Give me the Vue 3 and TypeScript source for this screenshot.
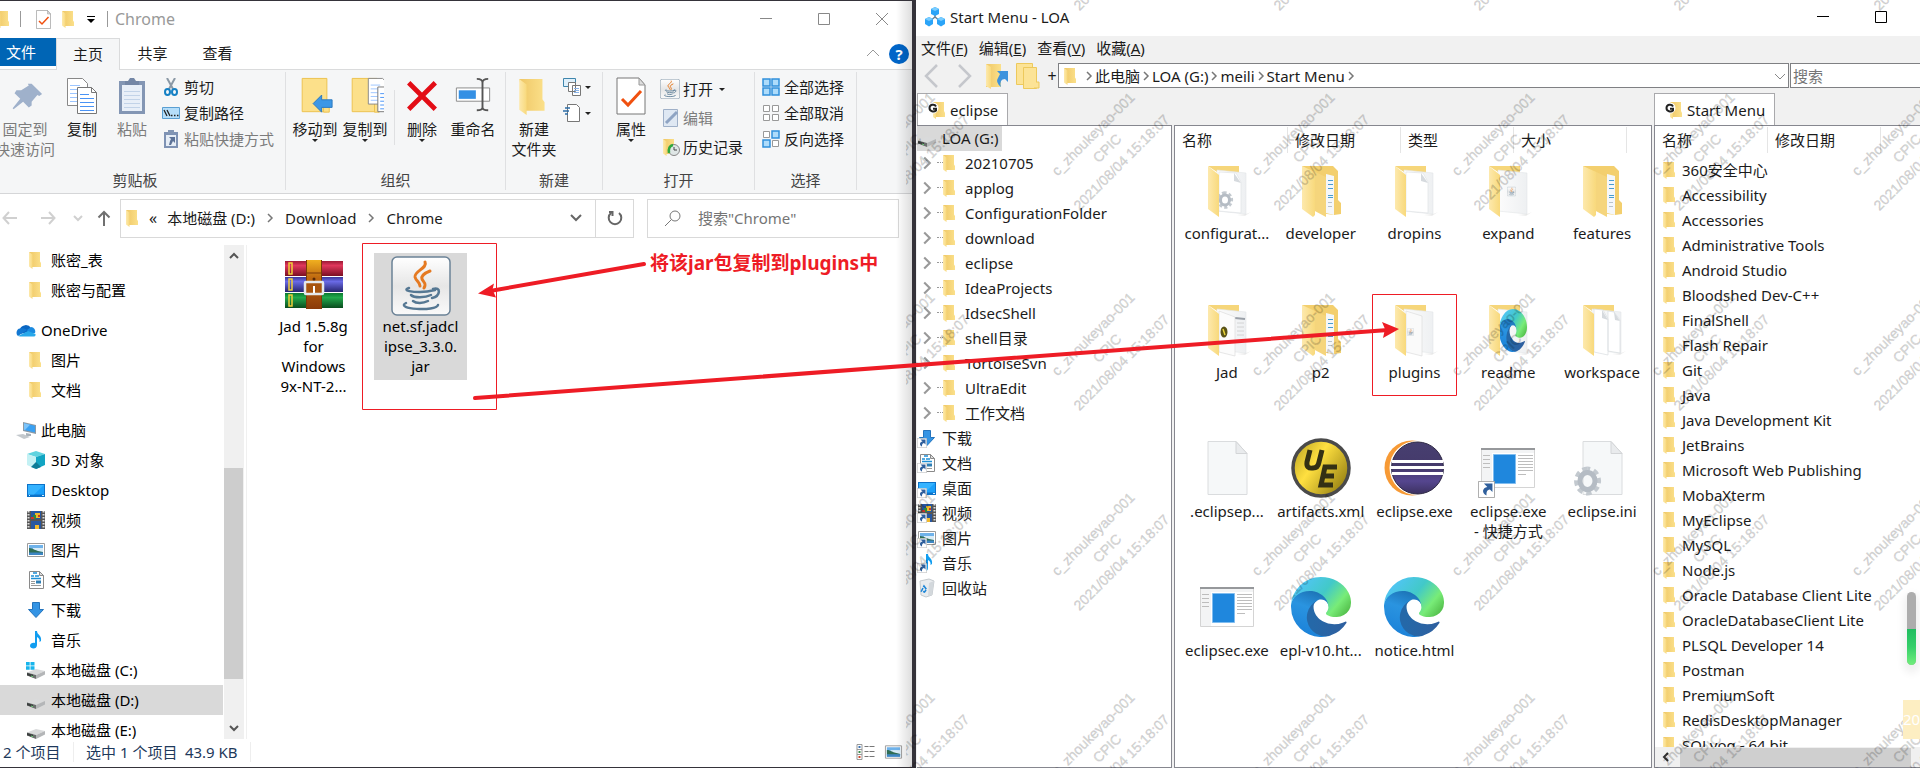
<script setup lang="ts">
import { ref } from 'vue'

interface Item {
  name: string
  icon: string
  link?: boolean
}

const navGroups: { root?: Item; children: Item[] }[] = [
  {
    children: [
      { name: '账密_表', icon: 'folder' },
      { name: '账密与配置', icon: 'folder' },
    ],
  },
  {
    root: { name: 'OneDrive', icon: 'cloud' },
    children: [
      { name: '图片', icon: 'folder' },
      { name: '文档', icon: 'folder' },
    ],
  },
  {
    root: { name: '此电脑', icon: 'pc' },
    children: [
      { name: '3D 对象', icon: 'cube' },
      { name: 'Desktop', icon: 'desktop' },
      { name: '视频', icon: 'video' },
      { name: '图片', icon: 'picture' },
      { name: '文档', icon: 'document' },
      { name: '下载', icon: 'download' },
      { name: '音乐', icon: 'music' },
      { name: '本地磁盘 (C:)', icon: 'disk-win' },
      { name: '本地磁盘 (D:)', icon: 'disk' },
      { name: '本地磁盘 (E:)', icon: 'disk' },
    ],
  },
]
const selectedNav = ref('本地磁盘 (D:)')

const treeFolders: string[] = [
  '20210705', 'applog', 'ConfigurationFolder', 'download', 'eclipse', 'IdeaProjects',
  'IdsecShell', 'shell目录', 'TortoiseSvn', 'UltraEdit', '工作文档',
]
const treeRoots: Item[] = [
  { name: '下载', icon: 'download', link: true },
  { name: '文档', icon: 'document', link: true },
  { name: '桌面', icon: 'desktop', link: true },
  { name: '视频', icon: 'video', link: true },
  { name: '图片', icon: 'picture', link: true },
  { name: '音乐', icon: 'music', link: true },
  { name: '回收站', icon: 'recycle' },
]

const files: Item[] = [
  { name: 'configurat...', icon: 'big-config' },
  { name: 'developer', icon: 'big-full' },
  { name: 'dropins', icon: 'big-paper' },
  { name: 'expand', icon: 'big-jar' },
  { name: 'features', icon: 'big-full' },
  { name: 'Jad', icon: 'big-jad' },
  { name: 'p2', icon: 'big-full' },
  { name: 'plugins', icon: 'big-plugins' },
  { name: 'readme', icon: 'big-edge' },
  { name: 'workspace', icon: 'big-two' },
  { name: '.eclipsep...', icon: 'big-file' },
  { name: 'artifacts.xml', icon: 'big-ue' },
  { name: 'eclipse.exe', icon: 'big-eclipse' },
  { name: 'eclipse.exe\n- 快捷方式', icon: 'big-exe', link: true },
  { name: 'eclipse.ini', icon: 'big-ini' },
  { name: 'eclipsec.exe', icon: 'big-exe' },
  { name: 'epl-v10.ht...', icon: 'edge' },
  { name: 'notice.html', icon: 'edge' },
]

const startMenu: string[] = [
  '360安全中心', 'Accessibility', 'Accessories', 'Administrative Tools', 'Android Studio',
  'Bloodshed Dev-C++', 'FinalShell', 'Flash Repair', 'Git', 'Java', 'Java Development Kit',
  'JetBrains', 'Microsoft Web Publishing', 'MobaXterm', 'MyEclipse', 'MySQL', 'Node.js',
  'Oracle Database Client Lite', 'OracleDatabaseClient Lite', 'PLSQL Developer 14', 'Postman',
  'PremiumSoft', 'RedisDesktopManager', 'SQLyog - 64 bit',
]

const menus: [string, string][] = [['文件', 'F'], ['编辑', 'E'], ['查看', 'V'], ['收藏', 'A']]
const crumbs: string[] = ['此电脑', 'LOA (G:)', 'meili', 'Start Menu']

const marks: { x: number; y: number }[] = []
for (let row = -1; row < 4; row++) {
  for (let col = 0; col < 6; col++) marks.push({ x: col * 200 - 13, y: row * 200 + 134 })
}
</script>

<template>
  <div class="page">
    <svg class="sprite" aria-hidden="true">
      <defs>
        <linearGradient id="gFlap" x1="0" x2="1"><stop offset="0" stop-color="#fde9ad" /><stop offset="1" stop-color="#f8d97c" /></linearGradient>
        <linearGradient id="gBody" x1="0" x2="1"><stop offset="0" stop-color="#efc766" /><stop offset="1" stop-color="#fbe08a" /></linearGradient>
        <linearGradient id="gPaper" x1="0" x2="1"><stop offset="0" stop-color="#fcfcfc" /><stop offset="1" stop-color="#eef0f2" /></linearGradient>
        <linearGradient id="gEdgeA" x1="0.2" x2="1"><stop offset="0" stop-color="#2568a8" /><stop offset="1" stop-color="#2f5f9f" /></linearGradient>
        <linearGradient id="gEdgeB" x1="0.6" y1="0" x2="0.3" y2="1"><stop offset="0" stop-color="#1b6fb0" /><stop offset="0.4" stop-color="#2a94e0" /><stop offset="1" stop-color="#1a80d8" /></linearGradient>
        <linearGradient id="gEdgeC" x1="0" y1="0.2" x2="1" y2="0.75"><stop offset="0" stop-color="#54c4ff" /><stop offset="0.5" stop-color="#42c9c8" /><stop offset="0.8" stop-color="#78ec78" /><stop offset="1" stop-color="#56c24e" /></linearGradient>
        <linearGradient id="gRed" x2="0" y2="1"><stop offset="0" stop-color="#9c1a35" /><stop offset="0.3" stop-color="#e0375c" /><stop offset="1" stop-color="#7a0f22" /></linearGradient>
        <linearGradient id="gBlue" x2="0" y2="1"><stop offset="0" stop-color="#39389a" /><stop offset="0.3" stop-color="#6a6ae6" /><stop offset="1" stop-color="#27256e" /></linearGradient>
        <linearGradient id="gGreen" x2="0" y2="1"><stop offset="0" stop-color="#0b7a30" /><stop offset="0.3" stop-color="#22a94c" /><stop offset="1" stop-color="#0a4c1e" /></linearGradient>
        <linearGradient id="gBelt" x2="0" y2="1"><stop offset="0" stop-color="#f0b020" /><stop offset="0.35" stop-color="#c06a10" /><stop offset="1" stop-color="#8a3a0a" /></linearGradient>
        <linearGradient id="gUe" x2="1" y2="0.7"><stop offset="0" stop-color="#b09a20" /><stop offset="0.45" stop-color="#ffe040" /><stop offset="1" stop-color="#9a8414" /></linearGradient>
        <linearGradient id="gEc" x2="0" y2="1"><stop offset="0" stop-color="#473f70" /><stop offset="0.5" stop-color="#453a6b" /><stop offset="0.75" stop-color="#55468f" /><stop offset="1" stop-color="#3c3160" /></linearGradient>
        <linearGradient id="gJar" x2="0" y2="1"><stop offset="0" stop-color="#ffffff" /><stop offset="0.5" stop-color="#e6e6e6" /><stop offset="1" stop-color="#fafafa" /></linearGradient>
      </defs>
      <symbol id="folder" viewBox="0 0 20 20"><path fill="url(#gBody)" d="M3 2h11v9.500l1 1.500v4H6z" /><path fill="url(#gFlap)" d="M3 2l3.500 2.500V19L3 16.500z" /></symbol>
      <symbol id="cloud" viewBox="0 0 20 20"><path fill="#0a66c2" d="M4 9a6 5.500 0 0 1 11-1l-2 4-9 2z" /><path fill="#1a8ae0" d="M11 10l4-3a4.500 4.500 0 0 1 4 6l-6 1z" /><path fill="#1277d2" d="M4 8.500c-3 0-5 5-2 7.500l9-6c-2-1.500-4-2-7-1.500z" /><path fill="#28a8ea" d="M2 16l10-5 7.500 3c.5 2-1 2.500-2 2.500H4z" /></symbol>
      <symbol id="pc" viewBox="0 0 20 20"><path fill="#8d99a3" d="M7 2l13 3v9L7 11z" /><path fill="#39a0f2" d="M8 3.200l11 2.600v6.800L8 10z" /><path fill="#7cc4fa" d="M8 3.200l6 1.500L9 10l-1-.2z" /><path fill="#a9b2b9" d="M10 13l5 1v2h-5z" /><path fill="#c3c8cc" d="M0 15l7-1 7 3-6 2z" /></symbol>
      <symbol id="cube" viewBox="0 0 20 20"><path fill="#5fd3df" d="M1 4l9-3 9 3-9 3z" /><path fill="#c4f1f4" d="M1 4l9 3v12l-9-4z" /><path fill="#12a5c3" d="M19 4l-9 3v12l9-4z" /><path fill="#0e7c97" d="M10 12l5 5-5 2-5-2z" /></symbol>
      <symbol id="desktop" viewBox="0 0 20 20"><path fill="#0d72c8" d="M1 4h18v13H1z" /><path fill="#1ba0fa" d="M2 5h16v9.500H2z" /><path fill="#35b3ff" d="M2 5h16L8 14.500H2z" /><path fill="#d8f0ff" d="M3 15h1v1H3zM16 15h2v1h-2z" /></symbol>
      <symbol id="video" viewBox="0 0 20 20"><path fill="#555" d="M1 1h18v18H1z" /><path stroke="#ddd" stroke-width="2" stroke-dasharray="1.500 1.500" d="M2.500 1v18M17.500 1v18" /><path fill="#2757a0" d="M5 1h10v8H5zM5 11h10v8H5z" /><path fill="#f0b92c" d="M9 3h5v5H9zM9 15h4v4H9z" /><path fill="#2d8b3c" d="M7 5h3v4H7z" /><path fill="#c8362c" d="M5 7h3v2H5zM12 5h2v2h-2z" /></symbol>
      <symbol id="picture" viewBox="0 0 20 20"><path fill="#fff" stroke="#9b9b9b" d="M1.500 3.500h17v13h-17z" /><path fill="#6fb2ea" d="M3 5h14v10H3z" /><path fill="#d8ecf7" d="M7 8h10v4H7z" /><path fill="#2f6d55" d="M3 8c4 0 6 3 14 4v1H3z" /><path fill="#3d86c4" d="M3 12.500h14V15H3z" /></symbol>
      <symbol id="document" viewBox="0 0 20 20"><path fill="#fff" stroke="#8a8a8a" d="M3.500 1.500h10l4 4v13h-14z" /><path fill="#ddd" stroke="#8a8a8a" d="M13.500 1.500v4h4z" /><path stroke="#1e8fd5" stroke-width="1.300" d="M7 3h4M5 6h3M9 6h4M5 8.500h10" /><path stroke="#999" d="M5 11.500h4M5 13.500h4M5 15.500h10" /><path fill="#2f7fb5" d="M10 10.500h5v3h-5z" /></symbol>
      <symbol id="download" viewBox="0 0 20 20"><path fill="#3494e4" stroke="#2474bd" d="M6.500 2.500h7v7h4L10 17.500 2.500 9.500h4z" /></symbol>
      <symbol id="music" viewBox="0 0 20 20"><path fill="#119df0" d="M9 1h2c0 4 5 4 4 10l-1.500 1c.5-3-1-4-2.500-5v8c0 5-7 4-7 1s3-3.500 5-3z" /></symbol>
      <symbol id="disk" viewBox="0 0 20 20"><path fill="#d9dadb" d="M1 12.500l9-3.500 9 2-9 4z" /><path fill="#6b6f6e" d="M1 12.500l9 2.500v4l-9-3.500z" /><path fill="#b4b6b8" d="M10 15l9-4v3.500L10 19z" /><path fill="#3c403f" d="M1 13l6 1.700v2.500l-6-2z" /><path stroke="#6ed07a" d="M5 16l2 .7" /></symbol>
      <symbol id="disk-win" viewBox="0 0 20 20"><use href="#disk" /><path fill="#18b5ec" d="M0 2h3.700v3.500H0zM4.500 2h4v3.500h-4zM0 6.300h3.700v3.500H0zM4.500 6.300h4v3.500h-4z" /></symbol>
      <symbol id="recycle" viewBox="0 0 20 20"><path fill="#e9ecee" stroke="#c5cace" d="M3 3l9-2 5 2-2 14-6 2-5-2z" /><path fill="#d3d8dc" d="M12 5l5-2-2 14-4 1.500z" /><path fill="none" stroke="#1d86d8" stroke-width="1.600" stroke-dasharray="4 1" d="M7 8l2.500 3.500-2 2.500-3-1z" /></symbol>
      <symbol id="link" viewBox="0 0 20 20"><path fill="#fff" stroke="#9a9a9a" d="M.5.500h19v19H.5z" /><path fill="#2f5f9c" d="M7 3h10v10l-3-3c-4 1-4 3-4 7-6-3-5-9 1-10z" /></symbol>
      <symbol id="check-doc" viewBox="0 0 30 38"><path fill="#fff" stroke="#777" d="M1 1h22l6 7v29H1z" /><path fill="#ddd" stroke="#999" d="M23 1v7h6z" /><path fill="none" stroke="#f0500f" stroke-width="3" d="M6 22l6 6 13-14" /></symbol>
      <symbol id="pages" viewBox="0 0 32 38"><path fill="#fff" stroke="#888" d="M1.500 1.500h15l5 5v22h-20z" /><path stroke="#9cc5ff" d="M4 8.500h10M4 12.500h12M4 16.500h12M4 20.500h12M4 24.500h8" /><path fill="#fff" stroke="#777" d="M11.500 10.500h14l5 5v21h-19z" /><path fill="none" stroke="#777" d="M25.500 10.500v5h5" /><path stroke="#4a93f5" d="M14 17.500h9M14 21.500h14M14 25.500h14M14 29.500h14M14 33.500h14" /></symbol>
      <symbol id="clip" viewBox="0 0 28 38"><path fill="#8396b4" d="M1 4h26v33H1z" /><path fill="#e8eff8" d="M4 8h20v26H4z" /><path fill="#7487a6" d="M7 4h3l2-3h4l2 3h3v4H7z" /><path stroke="#c2d3e8" d="M6 14.500h16M6 18.500h16M6 22.500h16M6 26.500h16M6 30.500h16" /></symbol>
      <symbol id="java" viewBox="0 0 60 60"><rect x="1" y="1" width="58" height="58" rx="5" fill="url(#gJar)" stroke="#6b8296" stroke-width="1.500" /><g fill="none" stroke-linecap="round"><path stroke="#e57a22" stroke-width="3" d="M34 6c3 6-11 9-10 15 1 4 5 5 5 9M39 15c-5 2-9 5-8 8s5 4 2 9" /><path stroke="#567893" stroke-width="2.500" d="M18 32c-8 3 5 4 11 4s11-1 15-2M20 39c3 3 14 3 20 0M22 45c3 2.500 10 2.500 15 0M42 33c8-3 8 7-1 9M15 47c-12 6 30 9 32 2" /></g></symbol>
      <symbol id="rar" viewBox="0 0 60 60"><path fill="url(#gRed)" d="M1 5h58v15H1z" /><path fill="url(#gBlue)" d="M1 21h58v15H1z" /><path fill="url(#gGreen)" d="M1 37h58v15H1z" /><path stroke="#f0cf3a" stroke-width="1.500" fill="none" d="M5 7h3v11H5zM5 23h3v11H5zM5 39h3v11H5z" /><path fill="url(#gBelt)" d="M22 4h16v49H22z" /><path stroke="#7a3a08" fill="none" d="M22.500 17h15M22.500 4v49M37.500 4v49" /><rect x="21" y="26" width="18" height="12" rx="1" fill="#a8540e" stroke="#e4e8ec" stroke-width="2.500" /><path stroke="#fff" stroke-width="2" d="M30 30v7" /><circle cx="30" cy="23" r="1.500" fill="#5a2a06" /></symbol>
      <symbol id="edge" viewBox="0 0 256 256" preserveAspectRatio="none"><g transform="translate(-4.600 -4.900)"><path fill="url(#gEdgeA)" d="M235.680 195.460a93.730 93.730 0 0 1-10.540 4.710 101.870 101.870 0 0 1-35.900 6.460c-47.320 0-88.540-32.550-88.540-74.320A31.480 31.480 0 0 1 117.130 105c-42.800 1.800-53.800 46.400-53.800 72.530 0 73.880 68.090 81.370 82.760 81.370 7.910 0 19.840-2.300 27-4.560l1.310-.44a128.340 128.340 0 0 0 66.600-52.800 4 4 0 0 0-5.320-5.640z" /><path fill="url(#gEdgeB)" d="M110.340 246.340A79.200 79.200 0 0 1 87.600 225a80.720 80.720 0 0 1 29.530-120c3.120-1.470 8.450-4.130 15.540-4a32.350 32.350 0 0 1 25.690 13 31.880 31.880 0 0 1 6.360 18.660c0-.21 24.460-79.600-80-79.600-43.900 0-80 41.660-80 78.210a130.150 130.150 0 0 0 12.110 56 128 128 0 0 0 156.380 67.110 75.550 75.550 0 0 1-62.780-8z" /><path fill="url(#gEdgeC)" d="M156.940 153.780c-.81 1.050-3.300 2.500-3.300 5.660 0 2.610 1.700 5.120 4.720 7.230 14.380 10 41.490 8.680 41.560 8.680a59.560 59.560 0 0 0 30.270-8.350 61.380 61.380 0 0 0 30.430-52.880c.26-22.410-8-37.310-11.340-43.910C227.390 28.760 181.650 4.920 131.910 4.920a128 128 0 0 0-128 126.200c.48-36.540 36.800-66.050 80-66.050 3.500 0 23.460.34 42 10.070 16.340 8.580 24.900 18.940 30.850 29.210 6.180 10.670 7.280 24.150 7.280 29.520s-2.040 13.330-7.100 19.910z" /></g></symbol>
      <symbol id="big-base" viewBox="0 0 60 60"><path fill="#f6d67a" d="M11 6h31v8H23z" /><path fill="url(#gPaper)" stroke="#e3e5e8" stroke-width=".6" d="M20 10l29 3v41l-29-3z" /><path fill="#00000012" d="M40 55l9-1 5-2-6 4z" /></symbol>
      <symbol id="big-flap" viewBox="0 0 60 60"><path fill="url(#gFlap)" d="M11 6l11 9v42l-11-8z" /></symbol>
      <symbol id="big-fold" viewBox="0 0 60 60"><path fill="#fff" stroke="#dcdfe3" stroke-width=".6" d="M22 12l17 1 5 9v31l-22-2z" /><path fill="#d6dade" d="M37 13l7 10-7-2z" /></symbol>
      <symbol id="big-gear" viewBox="0 0 30 36"><path fill="none" stroke="#c3c9cf" stroke-width="5" stroke-dasharray="5 3.600" d="M15 6a11 12 0 1 0 .1 0" /><ellipse cx="15" cy="18" rx="7.500" ry="8.500" fill="none" stroke="#b5bcc4" stroke-width="5" /></symbol>
      <symbol id="big-config" viewBox="0 0 60 60"><use href="#big-base" /><use href="#big-fold" /><use href="#big-gear" x="19" y="26" width="18" height="28" /><use href="#big-flap" /></symbol>
      <symbol id="big-paper" viewBox="0 0 60 60"><use href="#big-base" /><use href="#big-fold" /><use href="#big-flap" /></symbol>
      <symbol id="big-two" viewBox="0 0 60 60"><use href="#big-base" /><path fill="#fff" stroke="#d9dce0" stroke-width=".7" d="M22 10l9 1 5 9v36l-14-3zM36 12l6 1 6 8v33l-12-2z" /><path fill="#d6dade" d="M30 11l6 10-6-2zM42 13l6 9-5-1z" /><use href="#big-flap" /></symbol>
      <symbol id="big-jar" viewBox="0 0 60 60"><use href="#big-base" /><use href="#java" x="29" y="25" width="9" height="13" /><use href="#big-flap" /></symbol>
      <symbol id="big-plugins" viewBox="0 0 60 60"><use href="#big-base" /><path fill="#fafafa" stroke="#ddd" stroke-width=".7" d="M22 12l16 5v40l-16-4z" /><use href="#java" x="23" y="27" width="7" height="12" /><use href="#big-flap" /></symbol>
      <symbol id="big-jad" viewBox="0 0 60 60"><use href="#big-base" /><path stroke="#9aa0a8" stroke-width="2" d="M38 19l10 1" /><path stroke="#ccc" stroke-width=".8" d="M40 24h7M40 28h7M40 32h7M40 36h7" /><path fill="#fcfcfc" stroke="#ddd" stroke-width=".7" d="M22 12l16 6v39l-16-4z" /><ellipse cx="27" cy="33" rx="3.500" ry="5.500" fill="#5a5317" /><path stroke="#e8d33a" stroke-width="1.500" d="M26 30l2 6" /><use href="#big-flap" /></symbol>
      <symbol id="big-edge" viewBox="0 0 60 60"><use href="#big-base" /><use href="#edge" x="21" y="10" width="28" height="43" /><use href="#big-flap" /></symbol>
      <symbol id="big-full" viewBox="0 0 60 60"><path fill="#f3cf6e" d="M11 6h31l5 5v29l3 3v11l-7 1-14-2z" /><path fill="#f5f7f9" d="M35 14l8 2v39l-8-2z" /><path stroke="#4a9dd0" d="M37 20.500h5M37 24.500h5M37 28.500h5M37 35.500h5M37 37.500h5" /><path stroke="#b9c3cc" d="M37 42.500h4M37 46.500h4" /><path fill="#f5d57c" d="M22 11l13 6v40l-13-7z" /><path fill="url(#gFlap)" d="M11 6l13 6v43l-2 2-11-8z" /></symbol>
      <symbol id="big-file" viewBox="0 0 60 60"><path fill="#f6f8f9" stroke="#dadcde" d="M11 3.500h28l11 12v41H11z" /><path fill="#e9ebed" stroke="#d3d5d7" d="M39 3.500v12h11z" /></symbol>
      <symbol id="big-ini" viewBox="0 0 60 60"><use href="#big-file" /><use href="#big-gear" x="0" y="25" width="31" height="36" /></symbol>
      <symbol id="big-ue" viewBox="0 0 60 60"><circle cx="30" cy="30" r="28" fill="url(#gUe)" stroke="#4a4a4a" stroke-width="3.500" /><g fill="none" stroke="#333014" stroke-width="5"><path d="M19 12l-3 12q-1 7 6 6 5 0 6-6l3-12" /><path d="M46 29H34l-4 18h12M33 38h10" /></g></symbol>
      <symbol id="big-eclipse" viewBox="0 0 60 60"><circle cx="28" cy="30" r="27.500" fill="#f79a35" /><circle cx="32.500" cy="30" r="27" fill="#fff" /><circle cx="33.500" cy="30" r="26" fill="url(#gEc)" stroke="#2f2a45" /><path fill="#fff" d="M8 22h51v3H8zM7 28h53v3H7zM8 34h51v3H8z" /></symbol>
      <symbol id="big-exe" viewBox="0 0 60 60"><path fill="#f3f4f5" stroke="#d4d4d4" d="M3.500 10.500h53v39h-53z" /><path fill="#96989b" d="M3 10h54v2H3z" /><path fill="#fff" d="M14 15h42v34H14z" /><path fill="#1f87dd" stroke="#80bdf0" d="M15.500 16.500h22v29h-22z" /><path stroke="#bdbdbd" d="M5 17.500h7M5 21.500h7M5 25.500h7M5 29.500h7M40 17.500h15M40 20.500h15M40 23.500h15M40 26.500h15M40 29.500h15M40 32.500h15M40 36.500h8" /></symbol>
      <symbol id="chev" viewBox="0 0 10 10"><path fill="none" stroke="currentColor" stroke-width="1.500" d="M3 1l4 4-4 4" /></symbol>
      <symbol id="g-folder" viewBox="0 0 20 20"><path fill="url(#gBody)" d="M6 2h11v9l1 2v4H9z" /><path fill="url(#gFlap)" d="M6 2l3 2v15l-3-2z" /><circle cx="6" cy="8" r="5.500" fill="#fff" /><path fill="none" stroke="#222" stroke-width="2" d="M9 6.500C7.500 3.500 2.500 4.500 2.500 8S7 12.500 9 10.500V8.700H6" /></symbol>
    </svg>

    <main class="explorer">
      <header class="title">
        <svg class="i20 cut"><use href="#folder" /></svg>
        <span class="bar first"></span>
        <svg class="check"><use href="#check-doc" /></svg>
        <svg class="i20"><use href="#folder" /></svg>
        <svg class="quick" viewBox="0 0 8 8"><path d="M0 0h8v1H0zM0 3h8L4 7z" /></svg>
        <span class="bar"></span>
        <span class="caption">Chrome</span>
        <div class="controls">
          <button aria-label="最小化"><svg viewBox="0 0 12 12"><path d="M0 5.500h12" /></svg></button>
          <button aria-label="最大化"><svg viewBox="0 0 12 12"><path d="M.5.500h11v11H.5z" /></svg></button>
          <button aria-label="关闭"><svg viewBox="0 0 12 12"><path d="M0 0l12 12M12 0L0 12" /></svg></button>
        </div>
      </header>

      <div class="tabs">
        <button class="file">文件</button>
        <button class="active">主页</button>
        <button>共享</button>
        <button>查看</button>
        <span class="grow"></span>
        <button class="fold" aria-label="折叠"><svg viewBox="0 0 12 8"><path fill="none" stroke="#999" d="M0 7l6-6 6 6" /></svg></button>
        <button class="help">?</button>
      </div>

      <div class="ribbon">
        <section class="group clipboard">
          <div class="tools">
            <button class="big pin dim"><svg viewBox="0 0 40 40"><path fill="#9fb1cb" d="M27 7l11 11-3 2-2-1-6 7 0 4-3 2-6-6-10 8-1-1 8-10-6-6 2-3 5 0 8-5-1-2z" /></svg>固定到<br>快速访问</button>
            <button class="big copy"><svg><use href="#pages" /></svg>复制</button>
            <button class="big paste dim"><svg><use href="#clip" /></svg>粘贴</button>
            <div class="stack edge-gap">
              <button><svg viewBox="0 0 18 18"><path stroke="#8b99a6" stroke-width="2" d="M5 0l6 11M13 0L7 11" /><g fill="none" stroke="#1580c4" stroke-width="2"><ellipse cx="5.500" cy="14" rx="2.500" ry="3" /><ellipse cx="12.500" cy="14" rx="2.500" ry="3" /></g></svg>剪切</button>
              <button><svg viewBox="0 0 18 18"><path fill="#b5defa" stroke="#5a9fd2" d="M.5 3.500h17v11H.5z" /><path stroke="#222" stroke-width="1.300" fill="none" d="M2 6l3 6M5 6l3 6M9 11.500h1.500M12 11.500h1.500M15 11.500h1.500" /></svg>复制路径</button>
              <button class="dim"><svg viewBox="0 0 18 18"><path fill="#7e92b4" d="M2 2h14v16H2z" /><path fill="#e6edf6" d="M4 5h10v11H4z" /><path fill="#8396b4" d="M6 0h6v4H6z" /><path fill="#5d7398" d="M7 7h6v6l-2-2-2 4H7l1-4 1-2z" /></svg>粘贴快捷方式</button>
            </div>
          </div>
          <h2>剪贴板</h2>
        </section>

        <section class="group organise">
          <div class="tools">
            <button class="big"><svg viewBox="0 0 40 40"><path fill="#fce08a" stroke="#ecc14c" d="M6.500 1.500h26v35h-26z" /><path fill="#fce08a" stroke="#ecc14c" d="M29 25h6v12h-6z" /><path fill="#3c97e6" stroke="#2b78bf" d="M18 28l9-9v5h11v8H27v5z" /></svg>移动到<i></i></button>
            <button class="big"><svg viewBox="0 0 40 40"><path fill="#fce08a" stroke="#ecc14c" d="M6.500 1.500h26v35h-26z" /><path fill="#fce08a" stroke="#ecc14c" d="M30 25q3-3 5 0v12h-5z" /><svg x="19" y="0" width="21" height="25"><use href="#pages" /></svg></svg>复制到<i></i></button>
            <span class="split"></span>
            <button class="big del"><svg viewBox="0 0 40 40"><path stroke="#e30d16" stroke-width="5" d="M6 6l28 28M34 6L6 34" /></svg>删除<i></i></button>
            <button class="big"><svg viewBox="0 0 40 40"><path fill="#fff" stroke="#888" d="M2.500 11.500h35v14h-35z" /><path fill="#3590e4" d="M5 14h18v9H5z" /><path fill="none" stroke="#555" stroke-width="2" d="M24 2q6 0 6 4v26q0 3-6 3M36 2q-6 0-6 4v26q0 3 6 3" /></svg>重命名</button>
          </div>
          <h2>组织</h2>
        </section>

        <section class="group create">
          <div class="tools">
            <button class="big"><svg viewBox="1 1 18 18"><use href="#folder" width="20" height="20" /></svg>新建<br>文件夹</button>
            <div class="stack">
              <button aria-label="新建项目"><svg viewBox="0 0 18 18"><path fill="#dff0fb" stroke="#3f86ad" d="M.5.500h12v8H.5z" /><path fill="#fff" stroke="#777" d="M5.500 4.500h7v9h-7zM9.500 7.500h8v10h-8z" /><path stroke="#8ab4e8" d="M11 10.500h5M11 12.500h5M11 14.500h5" /></svg><i></i></button>
              <button aria-label="轻松访问"><svg viewBox="0 0 18 18"><path fill="#fff" stroke="#777" d="M4.500.500h9l3 3v14h-12z" /><path stroke="#2d6ea8" stroke-width="1.500" d="M2 4h5M0 7h6M2 10h3" /></svg><i></i></button>
            </div>
          </div>
          <h2>新建</h2>
        </section>

        <section class="group open">
          <div class="tools">
            <button class="big"><svg><use href="#check-doc" /></svg>属性<i></i></button>
            <div class="stack wide">
              <button><svg><use href="#java" /></svg>打开<i></i></button>
              <button class="dim"><svg viewBox="0 0 20 20"><path fill="#dfe8f3" stroke="#9fb0c8" d="M3.500 1.500h14v17h-14z" /><path stroke="#8fa4c3" stroke-width="3" d="M6 15L17 4" /></svg>编辑</button>
              <button><svg viewBox="0 0 20 20"><use href="#folder" width="20" height="20" /><circle cx="14" cy="13" r="5.500" fill="#dfe6e6" stroke="#888" /><path fill="none" stroke="#444" d="M14 10v3h3" /><path fill="none" stroke="#2fa83c" stroke-width="2.500" d="M13 8q-5 1-4 8" /></svg>历史记录</button>
            </div>
          </div>
          <h2>打开</h2>
        </section>

        <section class="group select">
          <div class="tools">
            <div class="stack">
              <button><svg viewBox="0 0 18 18"><path fill="#aedcfb" stroke="#3190dc" stroke-width="1.500" d="M1 1h7v7H1zM10 1h7v7h-7zM1 10h7v7H1zM10 10h7v7h-7z" /></svg>全部选择</button>
              <button><svg viewBox="0 0 18 18"><path fill="#fff" stroke="#999" d="M1.500 1.500h6v6h-6zM10.500 1.500h6v6h-6zM1.500 10.500h6v6h-6zM10.500 10.500h6v6h-6z" /></svg>全部取消</button>
              <button><svg viewBox="0 0 18 18"><path fill="#fff" stroke="#999" d="M1.500 1.500h6v6h-6zM10.500 10.500h6v6h-6z" /><path fill="#aedcfb" stroke="#3190dc" stroke-width="1.500" d="M10 1h7v7h-7zM1 10h7v7H1z" /></svg>反向选择</button>
            </div>
          </div>
          <h2>选择</h2>
        </section>
      </div>

      <div class="address">
        <div class="arrows">
          <button aria-label="后退"><svg viewBox="0 0 16 16"><path stroke="#d0d0d0" d="M15 8H2M7 2L1.500 8 7 14" /></svg></button>
          <button aria-label="前进"><svg viewBox="0 0 16 16"><path stroke="#d0d0d0" d="M1 8h13M9 2l5.500 6L9 14" /></svg></button>
          <button class="recent" aria-label="最近"><svg viewBox="0 0 16 16"><path stroke="#d0d0d0" d="M4 6l4 4 4-4" /></svg></button>
          <button aria-label="向上"><svg viewBox="0 0 16 16"><path stroke="#707070" d="M8 16V2M2.500 7.500L8 2l5.500 5.500" /></svg></button>
        </div>
        <nav class="path">
          <svg class="i20"><use href="#folder" /></svg>
          <span class="lead">«</span>
          <a href="#">本地磁盘 (D:)</a><svg class="chev"><use href="#chev" /></svg>
          <a href="#">Download</a><svg class="chev"><use href="#chev" /></svg>
          <a href="#">Chrome</a>
          <span class="grow"></span>
          <button aria-label="历史"><svg viewBox="0 0 16 16"><path d="M3 5l5 5 5-5" /></svg></button>
          <button class="refresh" aria-label="刷新"><svg viewBox="0 0 16 16"><path d="M4 3a6.300 6.300 0 1 0 8 0M2 2h3.500v4" /></svg></button>
        </nav>
        <label class="search"><svg viewBox="0 0 16 16"><circle cx="10" cy="6" r="5" /><path d="M6.500 9.500L0 16" /></svg><input type="text" aria-label="搜索" placeholder="搜索&quot;Chrome&quot;"></label>
      </div>

      <div class="body">
        <nav class="side">
          <ul v-for="(g, gi) in navGroups" :key="gi">
            <li v-if="g.root"><button class="root"><svg class="i20"><use :href="'#' + g.root.icon" /></svg>{{ g.root.name }}</button></li>
            <li v-for="c in g.children" :key="c.name">
              <button :class="{ on: selectedNav === c.name }" @click="selectedNav = c.name"><svg class="i20"><use :href="'#' + c.icon" /></svg>{{ c.name }}</button>
            </li>
          </ul>
        </nav>
        <div class="vscroll">
          <svg viewBox="0 0 10 10"><path d="M1 7l4-4 4 4" /></svg>
          <span class="space"></span><span class="thumb"></span><span class="rest"></span>
          <svg viewBox="0 0 10 10"><path d="M1 3l4 4 4-4" /></svg>
        </div>
        <div class="files">
          <button><svg><use href="#rar" /></svg>Jad 1.5.8g<br>for<br>Windows<br>9x-NT-2...</button>
          <button class="on"><svg><use href="#java" /></svg>net.sf.jadcl<br>ipse_3.3.0.<br>jar</button>
        </div>
      </div>

      <footer class="status">
        <span class="count">2 个项目</span>
        <span class="sel">选中 1 个项目&ensp;43.9 KB</span>
        <span class="grow"></span>
        <button aria-label="详细信息"><svg viewBox="0 0 18 16"><path fill="#fff" stroke="#999" d="M.5.500h5v15h-5zM.5 5.500h5M.5 10.500h5" /><path stroke="#777" d="M8 2.500h4M13 2.500h5M8 7.500h4M13 7.500h5M8 12.500h4M13 12.500h5" /><path fill="#3973b5" d="M2 2h2v2H2z" /><path fill="#3b8d4a" d="M2 7h2v2H2z" /><path fill="#d04428" d="M2 12h2v2H2z" /></svg></button>
        <button aria-label="大图标"><svg class="i20"><use href="#picture" /></svg></button>
      </footer>
    </main>

    <section class="loa">
      <header class="title">
        <svg class="logo" viewBox="0 0 20 20"><path stroke="#667f94" stroke-width="1.500" d="M10 10V6M10 10l-5 4M10 10l5 4" /><path fill="#2ba4f8" d="M10 0l4 2v5l-4 2-4-2V2zM4 10l4 2v5l-4 2.500L0 17v-5zM16 10l4 2v5l-4 2.500-4-2.500v-5z" /><path fill="#7acdff" d="M10 0l4 2-4 2-4-2zM4 10l4 2-4 2-4-2zM16 10l4 2-4 2-4-2z" /></svg>
        <span>Start Menu - LOA</span>
        <div class="controls dark">
          <button aria-label="最小化窗口"><svg viewBox="0 0 12 12"><path d="M0 5.500h12" /></svg></button>
          <button aria-label="最大化窗口"><svg viewBox="0 0 12 12"><path d="M.5.500h11v11H.5z" /></svg></button>
        </div>
      </header>
      <div class="menu">
        <button v-for="m in menus" :key="m[1]">{{ m[0] }}(<u>{{ m[1] }}</u>)</button>
      </div>
      <div class="toolbar">
        <button aria-label="返回"><svg viewBox="0 0 26 26"><path fill="none" stroke="#c5c7cc" stroke-width="2.500" d="M19 2L8 13l11 11" /></svg></button>
        <button aria-label="向前"><svg viewBox="0 0 26 26"><path fill="none" stroke="#c5c7cc" stroke-width="2.500" d="M9 2l11 11L9 24" /></svg></button>
        <button aria-label="打开目录"><svg viewBox="0 0 26 26"><path fill="url(#gBody)" d="M4 1h15v23H4z" /><path fill="url(#gFlap)" d="M4 1l5 3v22l-5-3z" /><path fill="#3e93dd" d="M15 8h11v11l-3-3q-6 0-4 8-6-5-3-9 1-2 2-4z" /></svg></button>
        <button aria-label="复制目录"><svg viewBox="0 0 26 26"><path fill="#fce396" stroke="#edc95c" d="M2.500.500h16v21h-16z" /><path fill="#fce396" stroke="#edc95c" d="M9.500 4.500h13v21h-13z" /><path stroke="#edc95c" d="M22 19h3v6h-5" fill="#fce396" /></svg></button>
        <button class="plus">+</button>
        <nav class="path">
          <svg class="i20"><use href="#folder" /></svg><svg class="chev"><use href="#chev" /></svg>
          <template v-for="c in crumbs" :key="c"><a href="#">{{ c }}</a><svg class="chev"><use href="#chev" /></svg></template>
          <span class="grow"></span>
          <button aria-label="展开地址"><svg viewBox="0 0 10 10"><path fill="none" stroke="#888" d="M0 3l5 5 5-5" /></svg></button>
        </nav>
        <input type="text" aria-label="搜索 Start Menu" placeholder="搜索">
      </div>

      <div class="panes">
        <div class="column">
          <button class="tab"><svg class="i20"><use href="#g-folder" /></svg>eclipse</button>
          <div class="pane">
            <button class="row drive"><svg class="i20"><use href="#disk" /></svg>LOA (G:)</button>
            <button v-for="f in treeFolders" :key="f" class="row child"><svg class="twist"><use href="#chev" /></svg><span class="dots"></span><svg class="i20"><use href="#folder" /></svg>{{ f }}</button>
            <button v-for="r in treeRoots" :key="r.name" class="row"><span class="pic"><svg class="i20"><use :href="'#' + r.icon" /></svg><svg v-if="r.link" class="link"><use href="#link" /></svg></span>{{ r.name }}</button>
          </div>
        </div>

        <div class="column">
          <div class="pane">
            <div class="heads"><button>名称</button><button>修改日期</button><button>类型</button><button>大小</button></div>
            <div class="icons">
              <button v-for="f in files" :key="f.name"><span class="pic"><svg><use :href="'#' + f.icon" /></svg><svg v-if="f.link" class="link"><use href="#link" /></svg></span><span>{{ f.name }}</span></button>
            </div>
          </div>
        </div>

        <div class="column">
          <button class="tab"><svg class="i20"><use href="#g-folder" /></svg>Start Menu</button>
          <div class="pane last">
            <div class="heads"><button>名称</button><button>修改日期</button></div>
            <div class="list">
              <button v-for="s in startMenu" :key="s" class="row"><svg class="i20"><use href="#folder" /></svg>{{ s }}</button>
            </div>
            <div class="hscroll"><svg viewBox="0 0 10 10"><path d="M7 1L3 5l4 4" /></svg><span></span></div>
          </div>
        </div>
      </div>

      <svg class="marks">
        <g v-for="m in marks" :key="m.x + '/' + m.y" :transform="'translate(' + m.x + ' ' + m.y + ') rotate(-45)'">
          <text y="5">c_zhoukeyao-001</text>
          <text y="25">CPIC</text>
          <text y="45">2021/08/04 15:18:07</text>
        </g>
      </svg>
      <div class="meter"><span></span></div>
      <div class="float">20</div>
    </section>

    <svg class="notes">
      <g fill="none" stroke="#ee1c25">
        <path d="M362.500 243.500h134v166h-134zM1372.500 294.500h84v101h-84z" />
        <path stroke-width="4" stroke-linecap="round" d="M644 264L490 291M475 398L1388 330" />
      </g>
      <path fill="#ee1c25" d="M478 293.500l16-10-1.500 6 3.500 8zM1399 329l-17-7 3 7-2 9z" />
      <text x="650" y="270">将该jar包复制到plugins中</text>
    </svg>
  </div>
</template>

<style>
html, body { margin: 0; overflow: hidden; }
</style>

<style scoped>
.page { position: relative; display: flex; height: 100vh; overflow: hidden; background: #35333a; color: #1b1b1b; font: 15px/20px "Noto Sans", "Noto Sans CJK SC", sans-serif; }
.page * { box-sizing: border-box; }
.sprite { position: absolute; width: 0; height: 0; }
button { display: flex; align-items: center; padding: 0; border: 0; background: none; color: inherit; font: inherit; text-align: left; white-space: nowrap; }
button svg { flex: none; }
a { color: inherit; text-decoration: none; }
input { min-width: 0; padding: 0; border: 0; outline: 0; background: none; color: inherit; font: inherit; }
input::placeholder { color: #757575; opacity: 1; }
.i20 { width: 20px; height: 20px; flex: none; }
.grow { flex: 1; }
.dim { color: #7c7c7c; }

.explorer { position: relative; flex: 0 0 47.5%; min-width: 0; display: flex; flex-direction: column; margin: 1px 0; overflow: hidden; background: #fff; }
.explorer::after { content: ""; position: absolute; top: 0; right: 0; bottom: 0; width: 16px; background: linear-gradient(90deg, #0000, #0002); pointer-events: none; }
.title { display: flex; align-items: center; height: 37px; }
.explorer .title { padding-bottom: 1px; }
.cut { margin-left: -6px; }
.bar { width: 1px; height: 16px; background: #999; }
.bar.first { margin: 0 15px 0 6px; }
.check { width: 15px; height: 19px; margin-right: 8px; }
.quick { width: 8px; height: 8px; margin: 2px 12px 0 8px; }
.caption { margin-left: 7px; color: #999; font-size: 16px; }
.controls { display: flex; margin-left: auto; color: #888; }
.controls button { width: 58px; height: 36px; justify-content: center; }
.explorer .controls { padding-right: 1px; }
.controls svg { width: 12px; height: 12px; fill: none; stroke: currentColor; }
.dark { color: #000; }

.tabs { display: flex; align-items: center; height: 32px; flex: none; border-bottom: 1px solid #dadbdc; }
.tabs button { width: 65px; height: 32px; justify-content: center; padding-bottom: 2px; }
.tabs .file { width: 56px; height: 28px; align-self: flex-start; padding: 0 14px 0 0; background: #0065b5; color: #fff; }
.tabs .active { width: 64px; border: 1px solid #dadbdc; border-bottom: 0; background: #f5f6f7; margin-bottom: -1px; }
.tabs .fold { width: 30px; }
.fold svg { width: 12px; height: 8px; }
.tabs .help { width: 20px; height: 20px; margin: 0 3px 0 1px; padding: 0; border-radius: 10px; background: #0065c8; color: #fff; font-weight: 700; }

.ribbon { display: flex; height: 124px; flex: none; padding: 2px 0 3px; border-bottom: 1px solid #d5d6d8; background: #f5f6f7; }
.group { display: flex; flex-direction: column; flex: none; border-right: 1px solid #dfe0e2; }
.group h2 { margin: 0; font: inherit; text-align: center; color: #444; }
.tools { display: flex; flex: 1; padding-top: 5px; }
.clipboard { width: 301px; margin-left: -15px; }
.organise { width: 220px; }
.create { width: 97px; }
.open { width: 152px; }
.select { width: 102px; }
.big { flex-direction: column; justify-content: flex-start; width: 50px; text-align: center; }
.big svg { width: 38px; height: 38px; margin-bottom: 4px; }
.pin { width: 60px; margin-left: 10px; }
.copy { width: 54px; }
.paste { width: 46px; }
.organise .tools { padding-left: 4px; }
.split { width: 1px; height: 55px; margin: 13px 4px 0; background: #dfe0e2; }
.del { margin-right: 3px; width: 46px; }
.create .tools { padding-left: 3px; }
.create .stack { margin-left: 4px; }
.open .tools { padding-left: 3px; }
i { width: 0; height: 0; margin-left: 3px; border: 3px solid #0000; border-top-color: #222; border-bottom: 0; }
.big i { margin: 0; }
.stack { display: flex; flex-direction: column; }
.stack button { height: 20px; margin-bottom: 6px; gap: 4px; }
.stack i { margin-left: 0; }
.stack svg { width: 18px; height: 18px; }
.edge-gap { margin-left: 7px; }
.select .stack { margin-left: 7px; }
.wide { margin: 2px 0 0 4px; }
.wide button { margin-bottom: 9px; gap: 3px; }
.wide i { margin-left: 3px; }
.wide svg { width: 20px; height: 20px; }

.address { display: flex; align-items: center; height: 48px; flex: none; padding-right: 13px; }
.arrows { display: flex; width: 120px; flex: none; padding-left: 2px; }
.arrows button { margin-right: 22px; }
.arrows .recent { margin: 0 10px 0 -8px; }
.arrows svg, .explorer .path button svg { width: 16px; height: 16px; fill: none; stroke-width: 2; }
.explorer .path button svg { stroke: #666; }
.path { display: flex; align-items: center; border: 1px solid #d9d9d9; background: #fff; }
.explorer .path { flex: 510; min-width: 0; height: 39px; padding-left: 2px; }
.explorer .path .chev { width: 10px; height: 10px; margin: 0 10px; color: #777; }
.explorer .path button { width: 38px; height: 37px; justify-content: center; }
.explorer .path .refresh { border-left: 1px solid #d9d9d9; }
.lead { margin: 0 10px 0 6px; font-size: 16px; }
.search { flex: 233; min-width: 0; display: flex; align-items: center; height: 39px; margin-left: 13px; padding-left: 17px; border: 1px solid #d9d9d9; }
.search svg { width: 16px; height: 16px; flex: none; margin-right: 17px; fill: none; stroke: #777; }
.search input { flex: 1; }

.body { flex: 1; display: flex; min-height: 0; padding-top: 3px; }
.side { width: 224px; flex: none; overflow: hidden; }
.side ul { margin: 0 0 10px; padding: 0; list-style: none; }
.side button { width: 223px; height: 30px; padding-left: 26px; gap: 5px; color: #000; }
.side .root { padding-left: 16px; }
.on, .side .on { background: #d9d9d9; }
.vscroll { width: 20px; flex: none; display: flex; flex-direction: column; align-items: center; padding: 5px 0; background: #f0f0f0; }
.vscroll svg { width: 10px; height: 12px; flex: none; fill: none; stroke: #555; stroke-width: 2; }
.vscroll span { width: 19px; align-self: flex-start; }
.space { flex: 206; }
.thumb { flex: 210; background: #cdcdcd; }
.rest { flex: 43; }
.files { flex: 1; display: flex; align-items: flex-start; margin-left: 2px; padding: 8px 0 0 20px; border-left: 1px solid #f0f0f0; gap: 14px; }
.files button { flex-direction: column; width: 93px; padding: 3px 0 4px; text-align: center; color: #000; }
.files svg { width: 60px; height: 60px; }
.status { display: flex; align-items: center; height: 28px; flex: none; padding: 0 9px 2px 3px; color: #1e395b; }
.count { width: 71px; border-right: 1px solid #eee; }
.sel { margin-left: 12px; padding-right: 12px; border-right: 1px solid #eee; }
.status button { margin-left: 9px; }
.status svg { width: 19px; height: 16px; }
.status .i20 { height: 20px; }

.loa { position: relative; flex: 1; min-width: 0; display: flex; flex-direction: column; margin-left: 4px; background: #f1f1f1; }
.loa .title { height: 36px; flex: none; padding: 0 0 2px 9px; background: #fff; gap: 5px; }
.loa .controls { padding-right: 10px; }
.logo { width: 20px; height: 20px; }
.menu { display: flex; height: 24px; gap: 11px; padding-left: 5px; }
.toolbar { display: flex; align-items: center; height: 30px; padding: 1px 0 0 2px; }
.toolbar > button svg { width: 26px; height: 26px; margin-right: 6px; }
.plus { width: 12px; justify-content: center; font-size: 16px; }
.loa .path { flex: 736; height: 25px; min-width: 0; padding: 0 3px 0 2px; border-color: #7f8083; }
.loa .chev { width: 10px; height: 10px; margin: 0 1px; color: #777; }
.loa .path .i20 + .chev { margin-left: 3px; }
.loa .path button svg { width: 10px; height: 10px; }
.toolbar input { flex: 129; height: 25px; margin-left: 1px; padding-left: 2px; border: 1px solid #7f8083; border-right: 0; background: #fff; }
.panes { flex: 1; display: grid; grid-template-columns: minmax(0, 255fr) minmax(0, 478fr) minmax(0, 266fr); gap: 2px; min-height: 0; padding: 3px 0 0 1px; }
.column { display: flex; flex-direction: column; min-height: 0; }
.tab { align-self: flex-start; height: 32px; padding: 0 9px; gap: 3px; border: 1px solid #a9a9ac; border-bottom: 0; background: #fff; }
.pane { flex: 1; display: flex; flex-direction: column; min-height: 0; overflow: hidden; border: 1px solid #86878f; background: #fff; }
.column > .pane:first-child { margin-top: 32px; }
.column:first-child .pane { border-left: 0; }
.last { border-right: 0; }
.row { height: 25px; flex: none; gap: 5px; padding-bottom: 2px; }
.drive { align-self: flex-start; padding-right: 4px; background: #d9d9d9; }
.twist { width: 14px; height: 14px; margin-left: 3px; color: #999; }
.child { gap: 0; }
.child .i20 { margin-right: 5px; }
.dots { width: 6px; height: 1px; margin: 0 -3px 0 3px; border-top: 1px dotted #999; }
.pic { position: relative; display: flex; }
.link { position: absolute; left: 0; bottom: 0; width: 10px; height: 10px; }
.heads { display: flex; height: 27px; flex: none; padding-top: 1px; overflow: hidden; }
.heads button { width: 113px; flex: none; padding: 0 0 0 7px; border-right: 1px solid #e5e5e5; }
.icons { display: grid; grid-template-columns: repeat(5, minmax(0, 1fr)); grid-auto-rows: 139px; padding: 7px 2px 0 5px; }
.icons button { flex-direction: column; justify-content: flex-start; gap: 3px; text-align: center; white-space: pre; }
.icons .pic svg { width: 60px; height: 60px; }
.icons .pic .link { width: 17px; height: 17px; }
.list { flex: 1; display: flex; flex-direction: column; min-height: 0; overflow: hidden; padding: 5px 0 0 5px; }
.list .row { gap: 2px; }
.hscroll { display: flex; align-items: center; height: 20px; flex: none; padding-left: 6px; background: #f0f0f0; }
.hscroll svg { width: 10px; height: 10px; fill: none; stroke: #333; stroke-width: 2; }
.hscroll span { flex: 1; height: 19px; margin: 0 9px; background: #cfcfcf; }
.marks { position: absolute; top: 0; left: -10px; width: calc(100% + 10px); height: 100%; pointer-events: none; }
.marks text { fill: #0000001f; stroke: #0000001c; font: 14px "Liberation Sans", sans-serif; text-anchor: middle; }
.meter { position: absolute; top: 592px; right: 4px; width: 9px; height: 73px; padding-top: 37px; border-radius: 5px; background: #adadad; box-shadow: 0 5px 8px 3px #0001; }
.meter span { display: block; height: 36px; border-radius: 0 0 5px 5px; background: linear-gradient(#20bd60, #36cf6a, #72ee7c); }
.float { position: absolute; top: 700px; right: 0; width: 17px; height: 39px; overflow: hidden; background: #fdeec2; color: #fff; line-height: 39px; text-align: center; }
.notes { position: absolute; top: 0; left: 0; width: 100%; height: 100%; pointer-events: none; }
.notes text { fill: #ee1c25; font-size: 19px; font-weight: 700; }
</style>
